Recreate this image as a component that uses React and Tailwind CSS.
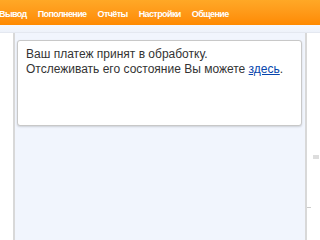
export default function App() {
  const tabs = ['Вывод', 'Пополнение', 'Отчёты', 'Настройки', 'Общение']
  return (
    <div className="w-[320px] h-[240px] overflow-hidden bg-white font-['Liberation_Sans',Arial,sans-serif]">
      {/* Top menu */}
      <div className="h-[25px] flex items-center gap-[11px] pt-[3px] -ml-[1px] bg-gradient-to-b from-[#ffa826] to-[#ff8a00]">
        {tabs.map((t) => (
          <span key={t} className="text-white text-[9px] leading-[10px] font-bold tracking-[-0.6px]">{t}</span>
        ))}
      </div>
      <div className="h-[8px] bg-gradient-to-b from-[#f6f8fc] to-[#eef2fa] border-b border-[#e4e8f0]" />

      <div className="flex h-[207px]">
        <div className="w-[13px] bg-white" />
        <div className="w-[2px] bg-[#d8d8d8]" />
        <div className="flex-1 bg-[#f1f5fd] pt-[7px] pl-[2px] pr-[3px]">
          <div className="bg-white border border-[#c8c8c8] rounded-[3px] shadow-[0_1px_2px_rgba(0,0,0,0.15)] h-[86px] px-[8px] pt-[6px] text-[12px] leading-[15px] text-[#333]">
            Ваш платеж принят в обработку.
            <br />
            Отслеживать его состояние Вы можете{' '}
            <a className="text-[#0645ad] underline">здесь</a>.
          </div>
        </div>
        <div className="w-[2px] bg-[#d8d8d8]" />
        <div className="w-[13px] bg-white relative">
          <div className="absolute left-[6px] top-[122px] w-[6px] h-[4px] bg-[#ddd]" />
          <div className="absolute left-0 top-[174px] w-[4px] h-[4px] border-t border-[#ccc]" />
        </div>
      </div>
    </div>
  )
}
